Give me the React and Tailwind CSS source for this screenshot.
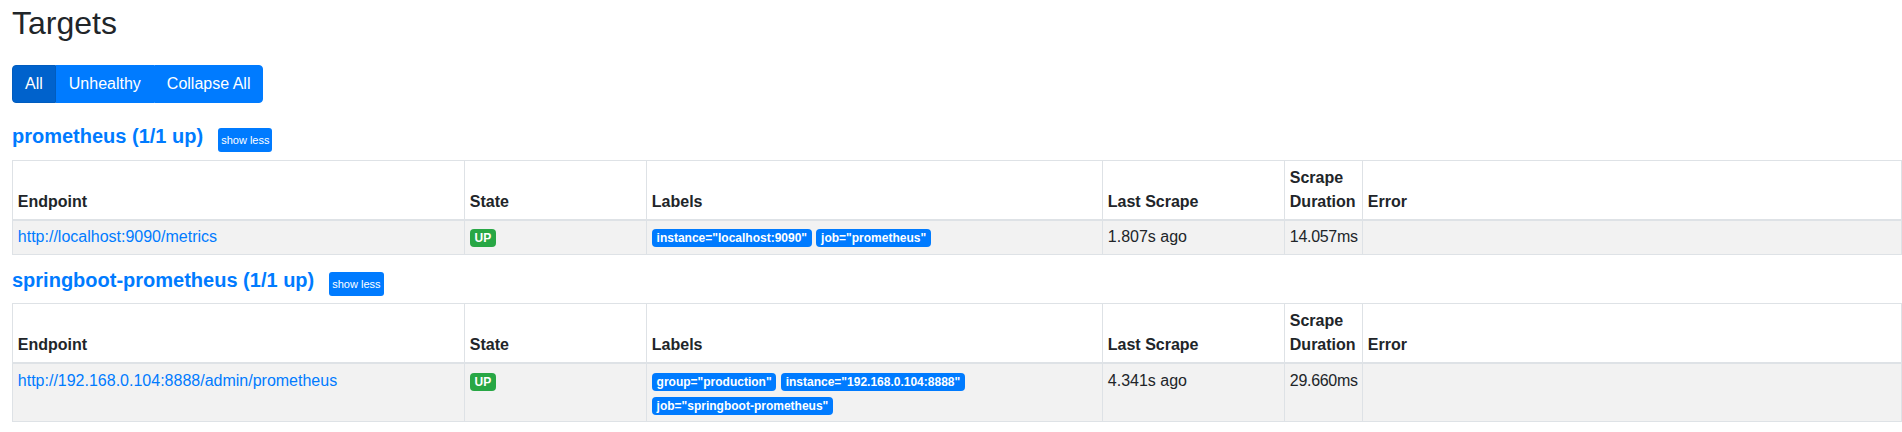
import React from "react";

const pools = [
  {
    name: "prometheus",
    up: "1/1 up",
    targets: [
      {
        endpoint: "http://localhost:9090/metrics",
        state: "UP",
        labels: ['instance="localhost:9090"', 'job="prometheus"'],
        lastScrape: "1.807s ago",
        duration: "14.057ms",
        error: "",
      },
    ],
  },
  {
    name: "springboot-prometheus",
    up: "1/1 up",
    targets: [
      {
        endpoint: "http://192.168.0.104:8888/admin/prometheus",
        state: "UP",
        labels: [
          'group="production"',
          'instance="192.168.0.104:8888"',
          'job="springboot-prometheus"',
        ],
        lastScrape: "4.341s ago",
        duration: "29.660ms",
        error: "",
      },
    ],
  },
];

function Badge({ children, color = "bg-[#007bff]" }) {
  return (
    <span
      className={`${color} inline-block whitespace-nowrap rounded-[4px] px-[4.8px] py-[3px] text-[12px] font-bold leading-none text-white align-baseline`}
    >
      {children}
    </span>
  );
}

function PoolTable({ targets }) {
  const th =
    "border border-[#dee2e6] border-b-2 p-[4.8px] text-left align-bottom font-bold leading-6";
  const td = "border border-[#dee2e6] p-[4.8px] align-top leading-6";

  return (
    <table className="w-full table-fixed border-collapse">
      <colgroup>
        <col className="w-[452px]" />
        <col className="w-[182px]" />
        <col className="w-[456px]" />
        <col className="w-[182px]" />
        <col className="w-[78px]" />
        <col />
      </colgroup>
      <thead>
        <tr>
          <th className={th}>Endpoint</th>
          <th className={th}>State</th>
          <th className={th}>Labels</th>
          <th className={th}>Last Scrape</th>
          <th className={th}>Scrape Duration</th>
          <th className={th}>Error</th>
        </tr>
      </thead>
      <tbody>
        {targets.map((t) => (
          <tr key={t.endpoint} className="bg-[#f2f2f2]">
            <td className={td}>
              <a href="#" className="text-[#007bff]">
                {t.endpoint}
              </a>
            </td>
            <td className={td}>
              <Badge color="bg-[#28a745]">{t.state}</Badge>
            </td>
            <td className={td}>
              {t.labels.map((l) => (
                <React.Fragment key={l}>
                  <Badge>{l}</Badge>{" "}
                </React.Fragment>
              ))}
            </td>
            <td className={td}>{t.lastScrape}</td>
            <td className={`${td} tracking-[-0.3px]`}>{t.duration}</td>
            <td className={td}>{t.error}</td>
          </tr>
        ))}
      </tbody>
    </table>
  );
}

export default function App() {
  return (
    <div
      className="min-h-screen bg-white pl-[12px] pt-[4px] text-[16px] text-[#212529]"
      style={{ fontFamily: '"Liberation Sans", Arial, sans-serif' }}
    >
      <h1 className="text-[32px] leading-[38px] font-normal">Targets</h1>

      <div className="mt-[23px] flex">
        <button className="h-[38px] rounded-l-[4px] border border-[#005cbf] bg-[#0062cc] px-[12px] text-white leading-6">
          All
        </button>
        <button className="h-[38px] border border-[#007bff] bg-[#007bff] px-[12px] text-white leading-6">
          Unhealthy
        </button>
        <button className="h-[38px] rounded-r-[4px] border border-[#007bff] bg-[#007bff] px-[12px] text-white leading-6">
          Collapse All
        </button>
      </div>

      {pools.map((pool, i) => (
        <div key={pool.name} className={i === 0 ? "mt-[21px]" : "mt-[13px]"}>
          <div className="flex items-start">
            <h2 className="text-[20px] font-bold leading-6 text-[#007bff]">
              {pool.name} ({pool.up})
            </h2>
            <button className="ml-[15px] mt-[4px] flex h-[24px] items-center rounded-[3px] bg-[#007bff] px-[3px] text-[11px] text-white">
              show less
            </button>
          </div>
          <div className={i === 0 ? "mt-[8px]" : "mt-[7px]"}>
            <PoolTable targets={pool.targets} />
          </div>
        </div>
      ))}
    </div>
  );
}
